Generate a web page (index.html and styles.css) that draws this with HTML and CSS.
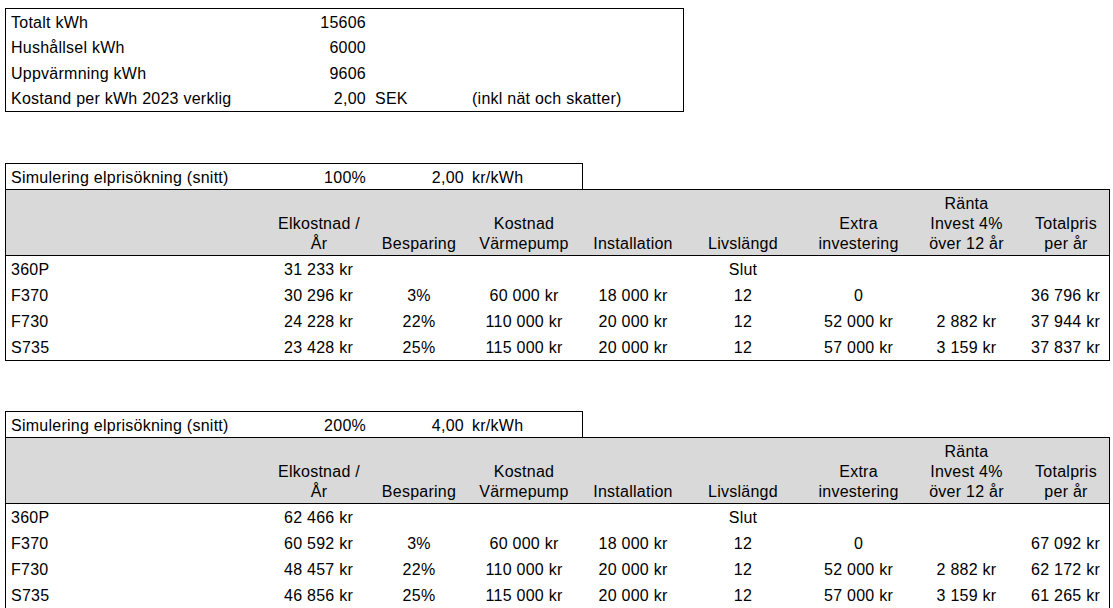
FILE: index.html
```html
<!DOCTYPE html>
<html lang="sv">
<head>
<meta charset="utf-8">
<title>Elkostnad simulering</title>
<link rel="stylesheet" href="styles.css">
</head>
<body>
<main class="sheet">
  <section class="info">
    <div class="c lbl">Totalt kWh</div><div class="c num">15606</div><div class="c"></div><div class="c"></div>
    <div class="c lbl">Hushållsel kWh</div><div class="c num">6000</div><div class="c"></div><div class="c"></div>
    <div class="c lbl">Uppvärmning kWh</div><div class="c num">9606</div><div class="c"></div><div class="c"></div>
    <div class="c lbl">Kostand per kWh 2023 verklig</div><div class="c num">2,00</div><div class="c unit">SEK</div><div class="c unit2">(inkl nät och skatter)</div>
  </section>

  <section class="sim">
    <div class="simbox">
      <div class="c lbl">Simulering elprisökning (snitt)</div><div class="c num">100%</div><div class="c num">2,00</div><div class="c unit2">kr/kWh</div>
    </div>
    <div class="tbl">
      <div class="h"></div>
      <div class="h">Elkostnad /<br>År</div>
      <div class="h">Besparing</div>
      <div class="h">Kostnad<br>Värmepump</div>
      <div class="h">Installation</div>
      <div class="h">Livslängd</div>
      <div class="h">Extra<br>investering</div>
      <div class="h">Ränta<br>Invest 4%<br>över 12 år</div>
      <div class="h r">Totalpris<br>per år</div>

      <div class="d l">360P</div><div class="d r2">31 233 kr</div><div class="d"></div><div class="d"></div><div class="d"></div><div class="d">Slut</div><div class="d"></div><div class="d"></div><div class="d r"></div>
      <div class="d l">F370</div><div class="d r2">30 296 kr</div><div class="d">3%</div><div class="d">60 000 kr</div><div class="d">18 000 kr</div><div class="d">12</div><div class="d">0</div><div class="d"></div><div class="d r">36 796 kr</div>
      <div class="d l">F730</div><div class="d r2">24 228 kr</div><div class="d">22%</div><div class="d">110 000 kr</div><div class="d">20 000 kr</div><div class="d">12</div><div class="d">52 000 kr</div><div class="d">2 882 kr</div><div class="d r">37 944 kr</div>
      <div class="d l">S735</div><div class="d r2">23 428 kr</div><div class="d">25%</div><div class="d">115 000 kr</div><div class="d">20 000 kr</div><div class="d">12</div><div class="d">57 000 kr</div><div class="d">3 159 kr</div><div class="d r">37 837 kr</div>
    </div>
  </section>

  <section class="sim">
    <div class="simbox">
      <div class="c lbl">Simulering elprisökning (snitt)</div><div class="c num">200%</div><div class="c num">4,00</div><div class="c unit2">kr/kWh</div>
    </div>
    <div class="tbl">
      <div class="h"></div>
      <div class="h">Elkostnad /<br>År</div>
      <div class="h">Besparing</div>
      <div class="h">Kostnad<br>Värmepump</div>
      <div class="h">Installation</div>
      <div class="h">Livslängd</div>
      <div class="h">Extra<br>investering</div>
      <div class="h">Ränta<br>Invest 4%<br>över 12 år</div>
      <div class="h r">Totalpris<br>per år</div>

      <div class="d l">360P</div><div class="d r2">62 466 kr</div><div class="d"></div><div class="d"></div><div class="d"></div><div class="d">Slut</div><div class="d"></div><div class="d"></div><div class="d r"></div>
      <div class="d l">F370</div><div class="d r2">60 592 kr</div><div class="d">3%</div><div class="d">60 000 kr</div><div class="d">18 000 kr</div><div class="d">12</div><div class="d">0</div><div class="d"></div><div class="d r">67 092 kr</div>
      <div class="d l">F730</div><div class="d r2">48 457 kr</div><div class="d">22%</div><div class="d">110 000 kr</div><div class="d">20 000 kr</div><div class="d">12</div><div class="d">52 000 kr</div><div class="d">2 882 kr</div><div class="d r">62 172 kr</div>
      <div class="d l">S735</div><div class="d r2">46 856 kr</div><div class="d">25%</div><div class="d">115 000 kr</div><div class="d">20 000 kr</div><div class="d">12</div><div class="d">57 000 kr</div><div class="d">3 159 kr</div><div class="d r">61 265 kr</div>
    </div>
  </section>
</main>
</body>
</html>
```

FILE: styles.css
```css
html, body {
  margin: 0;
  padding: 0;
  background: #ffffff;
}

body {
  font-family: "Liberation Sans", Arial, sans-serif;
  font-size: 16px;
  letter-spacing: 0.25px;
  color: #000000;
}

.sheet {
  padding: 8px 0 0 5px;
  display: flex;
  flex-direction: column;
  align-items: flex-start;
}

.c {
  white-space: nowrap;
  display: flex;
  align-items: center;
  padding: 2px 4px 0;
}

.lbl {
  padding-left: 5px;
}

.num {
  justify-content: flex-end;
}

.unit {
  padding-left: 5px;
}

.info {
  width: 677px;
  border: 1px solid #000;
  display: grid;
  grid-template-columns: 265px 99px 98px 1fr;
  grid-auto-rows: 25.5px;
}

.sim {
  margin-top: 51px;
  display: flex;
  flex-direction: column;
}

.sim + .sim {
  margin-top: 50px;
}

.simbox {
  width: 576px;
  border: 1px solid #000;
  border-bottom: none;
  display: grid;
  grid-template-columns: 265px 99px 98px 1fr;
  height: 25px;
}

.tbl {
  width: 1103px;
  border: 1px solid #000;
  display: grid;
  grid-template-columns: 272px 82px 118px 92px 126px 94px 137px 79px 103px;
  grid-template-rows: 66px;
  grid-auto-rows: 26px;
}

.h {
  background: #d9d9d9;
  border-bottom: 1px solid #000;
  display: flex;
  align-items: flex-end;
  justify-content: center;
  text-align: center;
  line-height: 20px;
  padding-bottom: 1px;
  white-space: nowrap;
}

.h.r {
  padding-left: 17px;
}

.d {
  display: flex;
  align-items: center;
  justify-content: center;
  white-space: nowrap;
  padding-top: 2px;
}

.d.l {
  justify-content: flex-start;
  padding-left: 5px;
}

.d.r2 {
  justify-content: flex-end;
  padding-right: 7px;
}

.d.r {
  justify-content: flex-end;
  padding-right: 9px;
}
```
